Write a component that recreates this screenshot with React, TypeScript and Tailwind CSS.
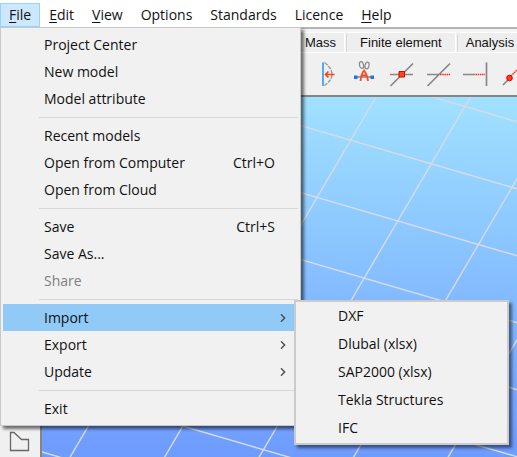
import type { ReactNode } from "react";

const menuBar = ["File", "Edit", "View", "Options", "Standards", "Licence", "Help"];
const underlined = ["File", "Edit", "View", "Help"];

type Entry = { label: string; shortcut?: string; disabled?: boolean; children?: string[]; open?: boolean };

const fileMenu: Entry[][] = [
  [{ label: "Project Center" }, { label: "New model" }, { label: "Model attribute" }],
  [{ label: "Recent models" }, { label: "Open from Computer", shortcut: "Ctrl+O" }, { label: "Open from Cloud" }],
  [{ label: "Save", shortcut: "Ctrl+S" }, { label: "Save As..." }, { label: "Share", disabled: true }],
  [
    {
      label: "Import",
      open: true,
      children: ["DXF", "Dlubal (xlsx)", "SAP2000 (xlsx)", "Tekla Structures", "IFC"],
    },
    { label: "Export", children: [] },
    { label: "Update", children: [] },
  ],
  [{ label: "Exit" }],
];

function Chevron() {
  return (
    <svg className="h-2 w-2 shrink-0" viewBox="0 0 8 8" fill="none" stroke="#444" strokeWidth="1.3">
      <path d="M2 0.3 L5.7 4 L2 7.7" />
    </svg>
  );
}

function SubMenu({ items }: { items: string[] }) {
  return (
    <ul className="absolute -top-1 left-[291px] z-20 w-[215px] border-2 border-[#cbcbcb] bg-[#f1f1f1] pb-px shadow-[3px_3px_3px_rgba(0,0,0,0.5)]">
      {items.map((item) => (
        <li key={item}>
          <button className="flex h-7 w-full items-center pl-[42px] text-left whitespace-nowrap">{item}</button>
        </li>
      ))}
    </ul>
  );
}

function FileMenu() {
  return (
    <div className="absolute top-full left-0 z-10 w-[301px] border border-[#c8c8c8] bg-[#f1f1f1] px-0.5 py-[3px] shadow-[3px_3px_3px_rgba(0,0,0,0.55)]">
      {fileMenu.map((group, g) => (
        <div key={g}>
          {g > 0 && <hr className="mt-[5px] mb-1 ml-9 border-t border-[#d7d7d7]" />}
          <ul>
            {group.map((e) => (
              <li key={e.label} className="relative">
                <button
                  disabled={e.disabled}
                  className={`flex h-[27px] w-full items-center justify-between pr-[11px] pl-[41px] text-left whitespace-nowrap ${
                    e.open ? "bg-[#91c9f7]" : ""
                  } ${e.disabled ? "text-[#808080]" : ""}`}
                >
                  <span>{e.label}</span>
                  {e.shortcut && <span className="pr-3">{e.shortcut}</span>}
                  {e.children && <Chevron />}
                </button>
                {e.open && e.children && <SubMenu items={e.children} />}
              </li>
            ))}
          </ul>
        </div>
      ))}
    </div>
  );
}

function MenuBar() {
  return (
    <nav className="relative flex h-[27px] shrink-0 items-end bg-white">
      {menuBar.map((m) => (
        <button
          key={m}
          className={`h-6 border px-2 whitespace-nowrap ${
            m === "File" ? "border-[#99d1ff] bg-[#cce8ff]" : "border-transparent"
          }`}
        >
          {underlined.includes(m) ? <span className="underline underline-offset-2">{m[0]}</span> : m[0]}
          {m.slice(1)}
        </button>
      ))}
      <FileMenu />
    </nav>
  );
}

function Tool({ label, children }: { label: string; children: ReactNode }) {
  return (
    <button aria-label={label} className="flex h-8 w-[33px] shrink-0 items-center justify-center">
      <svg className="h-7 w-7" viewBox="0 0 28 28" fill="none">
        {children}
      </svg>
    </button>
  );
}

function Toolbar() {
  return (
    <div className="flex h-[42px] items-center gap-1 overflow-hidden pl-[311px]">
      <Tool label="Offset">
        <path d="M9 2.5V26" stroke="#3da5f4" strokeWidth="1.8" />
        <path d="M10.5 2.5C15 6 18 10 18 14.5S15 22 10.5 25.5" stroke="#999" strokeWidth="1.4" strokeDasharray="4 1" />
        <path d="M20.5 14.5H11.5M14.5 11.5L11.5 14.5L14.5 17.5" stroke="#ff4010" strokeWidth="1.6" />
      </Tool>
      <Tool label="Cut">
        <ellipse cx="10.5" cy="5" rx="2" ry="3.5" stroke="#8a8a8a" strokeWidth="1.2" transform="rotate(-12 10.5 5)" />
        <ellipse cx="16" cy="5.5" rx="2" ry="3.5" stroke="#8a8a8a" strokeWidth="1.2" transform="rotate(12 16 5.5)" />
        <path d="M4 17H22" stroke="#888" strokeWidth="1.5" />
        <path d="M9.5 21C10 16 11 13 13 10.5C15 13 16.500 16 17 21M10.5 15.5H16" stroke="#ff4a20" strokeWidth="1.8" />
        <path d="M3 15.5h3.500v3.500H3zM19.5 15.5H23v3.500h-3.500z" fill="#1a73f0" />
      </Tool>
      <Tool label="Intersect">
        <path d="M2 14.5H25M2.500 26L25 3.500" stroke="#888" strokeWidth="1.700" />
        <path d="M11 11.500h5.500V17H11z" fill="#ff4a10" stroke="#e00000" />
      </Tool>
      <Tool label="Trim">
        <path d="M2 14.500H14M2.500 26L25 3.500" stroke="#888" strokeWidth="1.700" />
        <path d="M15 14.500H25" stroke="#f22" strokeWidth="1.500" strokeDasharray="1.5 0.7" />
      </Tool>
      <Tool label="Extend">
        <path d="M1 14.500H13M24.500 2.500V26" stroke="#888" strokeWidth="1.700" />
        <path d="M13.500 14.500H23" stroke="#f22" strokeWidth="1.500" strokeDasharray="1.5 0.7" />
      </Tool>
      <Tool label="Divide">
        <path d="M4 25L9 20" stroke="#888" strokeWidth="1.700" />
        <path d="M12 16L25 3" stroke="#f22" strokeWidth="1.500" strokeDasharray="1.5 0.7" />
        <circle cx="10.500" cy="18" r="2.800" fill="#ff3a10" stroke="#e00000" />
      </Tool>
    </div>
  );
}

function Tabs() {
  return (
    <div className="flex h-6 items-end overflow-hidden border-b border-white bg-[#f4f4f4] pl-[296px] font-['Liberation_Sans',Arial,sans-serif] text-[13px]">
      {["Mass", "Finite element", "Analysis"].map((t) => (
        <button
          key={t}
          className="mr-px h-5 shrink-0 rounded-tl-[4px] border-t border-r border-l border-t-white border-r-white border-l-[#d8d8d8] bg-[#eeeeee] px-[13px] pt-px first:px-2 last:px-2"
        >
          {t}
        </button>
      ))}
    </div>
  );
}

function Viewport() {
  // Ground grid: two families of parallel lines
  const steep = Array.from({ length: 16 }, (_, i) => -44 + i * 94.5);
  const shallow = Array.from({ length: 22 }, (_, i) => -650 + i * 67);
  return (
    <main className="min-w-0 flex-1 overflow-hidden bg-linear-to-b from-[#a1e1ff] to-[#6e9bff]">
      <svg className="h-full w-full" stroke="#d6dce2" strokeWidth="1.4">
        {steep.map((x) => (
          <line key={x} x1={x} y1="0" x2={x - 587} y2="1000" />
        ))}
        {shallow.map((y) => (
          <line key={y} x1="0" y1={y} x2="2000" y2={y + 584} />
        ))}
      </svg>
    </main>
  );
}

export default function App() {
  return (
    <div className="flex h-screen w-full flex-col overflow-hidden bg-[#f0f0f0] font-['Open_Sans','Noto_Sans',sans-serif] text-sm text-[#111]">
      <MenuBar />
      <header className="shrink-0 border-t-2 border-b-2 border-t-[#b4b4b4] border-b-[#858585]">
        <Tabs />
        <Toolbar />
      </header>
      <div className="flex min-h-0 flex-1">
        <aside className="flex w-[42px] shrink-0 flex-col justify-end border-r-2 border-[#858585] pb-1 pl-2">
          <button aria-label="Polygon" className="h-6 w-6">
            <svg className="h-6 w-6" viewBox="0 0 24 24" fill="none" stroke="#666" strokeWidth="1.3">
              <path d="M2.500 3.500H6L13.500 10.500H20.500V21.500H2.500Z" />
            </svg>
          </button>
        </aside>
        <Viewport />
      </div>
    </div>
  );
}
